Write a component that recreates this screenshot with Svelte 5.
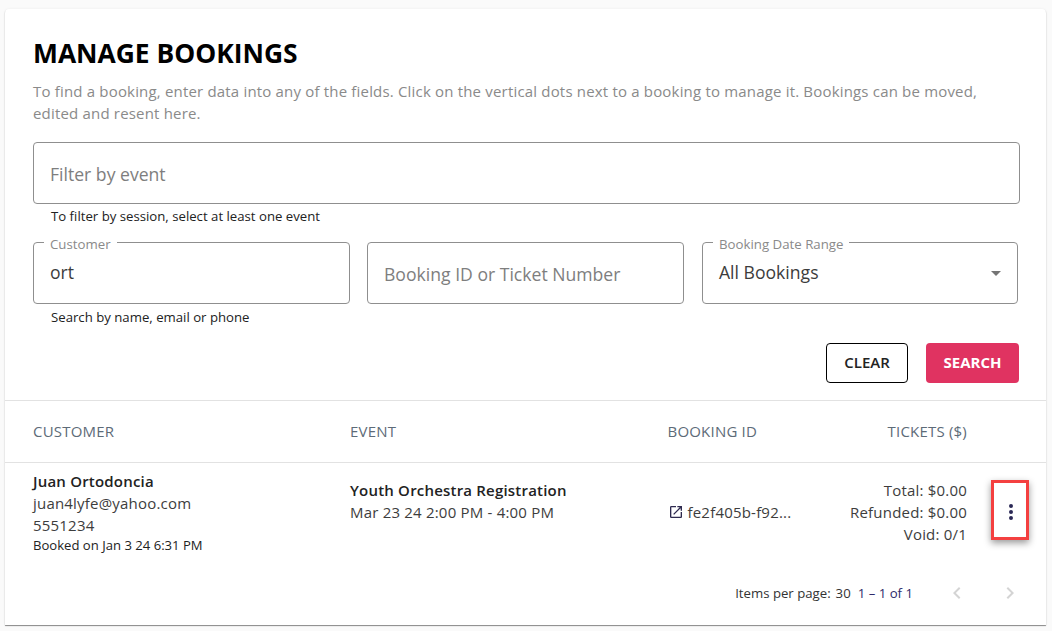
<script lang="ts">
	const booking = {
		name: 'Juan Ortodoncia',
		email: 'juan4lyfe@yahoo.com',
		phone: '5551234',
		booked: 'Booked on Jan 3 24 6:31 PM',
		event: 'Youth Orchestra Registration',
		when: 'Mar 23 24 2:00 PM - 4:00 PM',
		id: 'fe2f405b-f92...'
	};
</script>

<div class="card">
	<section class="filters">
		<h1>MANAGE BOOKINGS</h1>
		<p class="intro">To find a booking, enter data into any of the fields. Click on the vertical dots next to a booking to manage it. Bookings can be moved, edited and resent here.</p>

		<div class="field"><span class="placeholder">Filter by event</span></div>
		<div class="hint">To filter by session, select at least one event</div>

		<div class="fields">
			<div>
				<div class="field">
					<span class="legend">Customer</span>
					<span class="value">ort</span>
				</div>
				<div class="hint low">Search by name, email or phone</div>
			</div>
			<div class="field"><span class="placeholder">Booking ID or Ticket Number</span></div>
			<div class="field select">
				<span class="legend">Booking Date Range</span>
				<span class="value">All Bookings</span>
				<span class="arrow"></span>
			</div>
		</div>

		<div class="actions">
			<button class="clear">CLEAR</button>
			<button class="search">SEARCH</button>
		</div>
	</section>

	<div class="table-row head">
		<div>CUSTOMER</div>
		<div>EVENT</div>
		<div>BOOKING ID</div>
		<div class="right">TICKETS ($)</div>
		<div></div>
	</div>

	<div class="table-row body">
		<div class="customer">
			<strong>{booking.name}</strong>
			<div>{booking.email}</div>
			<div>{booking.phone}</div>
			<small>{booking.booked}</small>
		</div>
		<div class="event">
			<strong>{booking.event}</strong>
			<div>{booking.when}</div>
		</div>
		<div class="booking-id">
			<svg width="16" height="16" viewBox="0 0 24 24" fill="#2e2a4f"><path d="M19 19H5V5h7V3H5a2 2 0 0 0-2 2v14a2 2 0 0 0 2 2h14c1.100 0 2-.9 2-2v-7h-2v7zM14 3v2h3.590l-9.830 9.830 1.410 1.410L19 6.410V10h2V3h-7z"/></svg>
			<span>{booking.id}</span>
		</div>
		<div class="tickets">
			<div>Total: $0.00</div>
			<div>Refunded: $0.00</div>
			<div>Void: 0/1</div>
		</div>
		<div class="menu">
			<svg width="24" height="24" viewBox="0 0 24 24" fill="#2a2855"><path d="M12 8a2 2 0 1 0 0-4 2 2 0 0 0 0 4zm0 2a2 2 0 1 0 0 4 2 2 0 0 0 0-4zm0 6a2 2 0 1 0 0 4 2 2 0 0 0 0-4z"/></svg>
			<span class="highlight"></span>
		</div>
	</div>

	<div class="pager">
		<span>Items per page:</span>
		<span class="size">30</span>
		<span class="range">1 – 1 of 1</span>
		<svg class="prev" width="24" height="24" viewBox="0 0 24 24" fill="#d4d4d4"><path d="M15.410 7.410 14 6l-6 6 6 6 1.410-1.410L10.830 12z"/></svg>
		<svg class="next" width="24" height="24" viewBox="0 0 24 24" fill="#d4d4d4"><path d="M10 6 8.590 7.410 13.170 12l-4.580 4.590L10 18l6-6z"/></svg>
	</div>
</div>

<style>
	:global(body) {
		background: #fafafa;
		font-family: "Open Sans", "Noto Sans", sans-serif;
		color: #333;
	}
	.card {
		margin: 9px 6px 5px 5px;
		height: 616px;
		box-sizing: border-box;
		background: #fff;
		border-radius: 4px 4px 0 0;
		box-shadow: 0 1px 1px rgba(0, 0, 0, 0.45), 0 0 3px rgba(0, 0, 0, 0.06);
	}
	.filters {
		padding: 27px 26px 17px 28px;
		border-bottom: 1px solid #e2e2e2;
	}
	h1 {
		margin: 0;
		font-size: 26.400px;
		line-height: 34px;
		font-weight: 700;
		color: #000;
	}
	.intro {
		margin: 10px 0 18px;
		font-size: 15px;
		line-height: 22px;
		color: #8a8a8a;
		letter-spacing: 0.18px;
	}
	.field {
		position: relative;
		box-sizing: border-box;
		height: 62px;
		border: 1px solid #8f8f8f;
		border-radius: 4px;
		padding: 0 16px;
		display: flex;
		align-items: center;
		font-size: 17.600px;
	}
	.placeholder { color: #7e7e7e; margin-top: 2px; }
	.value { color: #3c3c3c; margin-top: -2px; }
	.legend {
		position: absolute;
		top: -7px;
		left: 10px;
		padding: 0 6px;
		background: #fff;
		font-size: 13.250px;
		line-height: 16px;
		color: #8a8a8a;
	}
	.hint {
		padding: 4px 17px 0 18px;
		height: 18px;
		font-size: 13.200px;
		line-height: 17px;
		color: #222;
	}
	.hint.low {
		padding-top: 5px;
		height: 17px;
	}
	.fields {
		display: grid;
		grid-template-columns: repeat(3, 317px);
		column-gap: 17px;
		margin-top: 16px;
	}
	.select { margin-left: 1px; }
	.arrow {
		position: absolute;
		right: 16px;
		top: 28px;
		border: 5px solid transparent;
		border-top-color: #757575;
		border-bottom: 0;
	}
	.actions {
		display: flex;
		justify-content: flex-end;
		gap: 18px;
		margin-top: 17px;
		margin-right: 1px;
	}
	button {
		height: 40px;
		box-sizing: border-box;
		border-radius: 4px;
		padding-bottom: 3px;
		font-family: inherit;
		font-size: 15px;
		font-weight: 600;
		cursor: pointer;
	}
	.clear {
		width: 82px;
		background: #fff;
		border: 1px solid #000;
		color: #222;
	}
	.search {
		width: 93px;
		background: #e03361;
		border: 0;
		color: #fff;
		font-weight: 700;
	}
	.table-row {
		display: grid;
		grid-template-columns: 317px 317.500px 150px 149.500px 1fr;
		padding-left: 28px;
		border-bottom: 1px solid #e2e2e2;
		font-size: 15px;
		line-height: 22px;
		color: #3d3d3d;
		letter-spacing: 0.2px;
	}
	.head {
		height: 62px;
		box-sizing: border-box;
		padding-bottom: 2px;
		align-items: center;
		color: #5d6b78;
	}
	.right { text-align: right; }
	.body {
		height: 105px;
		box-sizing: border-box;
		padding-top: 7px;
		border-bottom: 0;
	}
	strong {
		display: block;
		font-weight: 600;
		color: #222;
	}
	small {
		display: block;
		font-size: 13.100px;
		line-height: 19px;
		color: #222;
		letter-spacing: 0;
	}
	.event { padding-top: 9px; }
	.booking-id {
		display: flex;
		align-items: center;
		gap: 4px;
		height: 22px;
		margin-top: 31px;
		white-space: nowrap;
	}
	.tickets {
		text-align: right;
		padding-top: 9px;
	}
	.menu {
		position: relative;
		display: flex;
		justify-content: center;
		padding-top: 30px;
		margin-left: 20px;
		width: 48px;
		height: 24px;
	}
	.highlight {
		position: absolute;
		left: 4px;
		top: 10px;
		width: 38px;
		height: 60px;
		box-sizing: border-box;
		border: 3px solid #f44040;
		box-shadow: 0 3px 7px rgba(0, 0, 0, 0.4);
	}
	.pager {
		display: flex;
		align-items: center;
		justify-content: flex-end;
		height: 50px;
		padding-right: 24px;
		font-size: 13.200px;
		color: #333;
	}
	.size { margin-left: 5px; }
	.range { margin-left: 7px; color: #2e2a6a; }
	.prev { margin-left: 32px; }
	.next { margin-left: 29px; }
</style>
